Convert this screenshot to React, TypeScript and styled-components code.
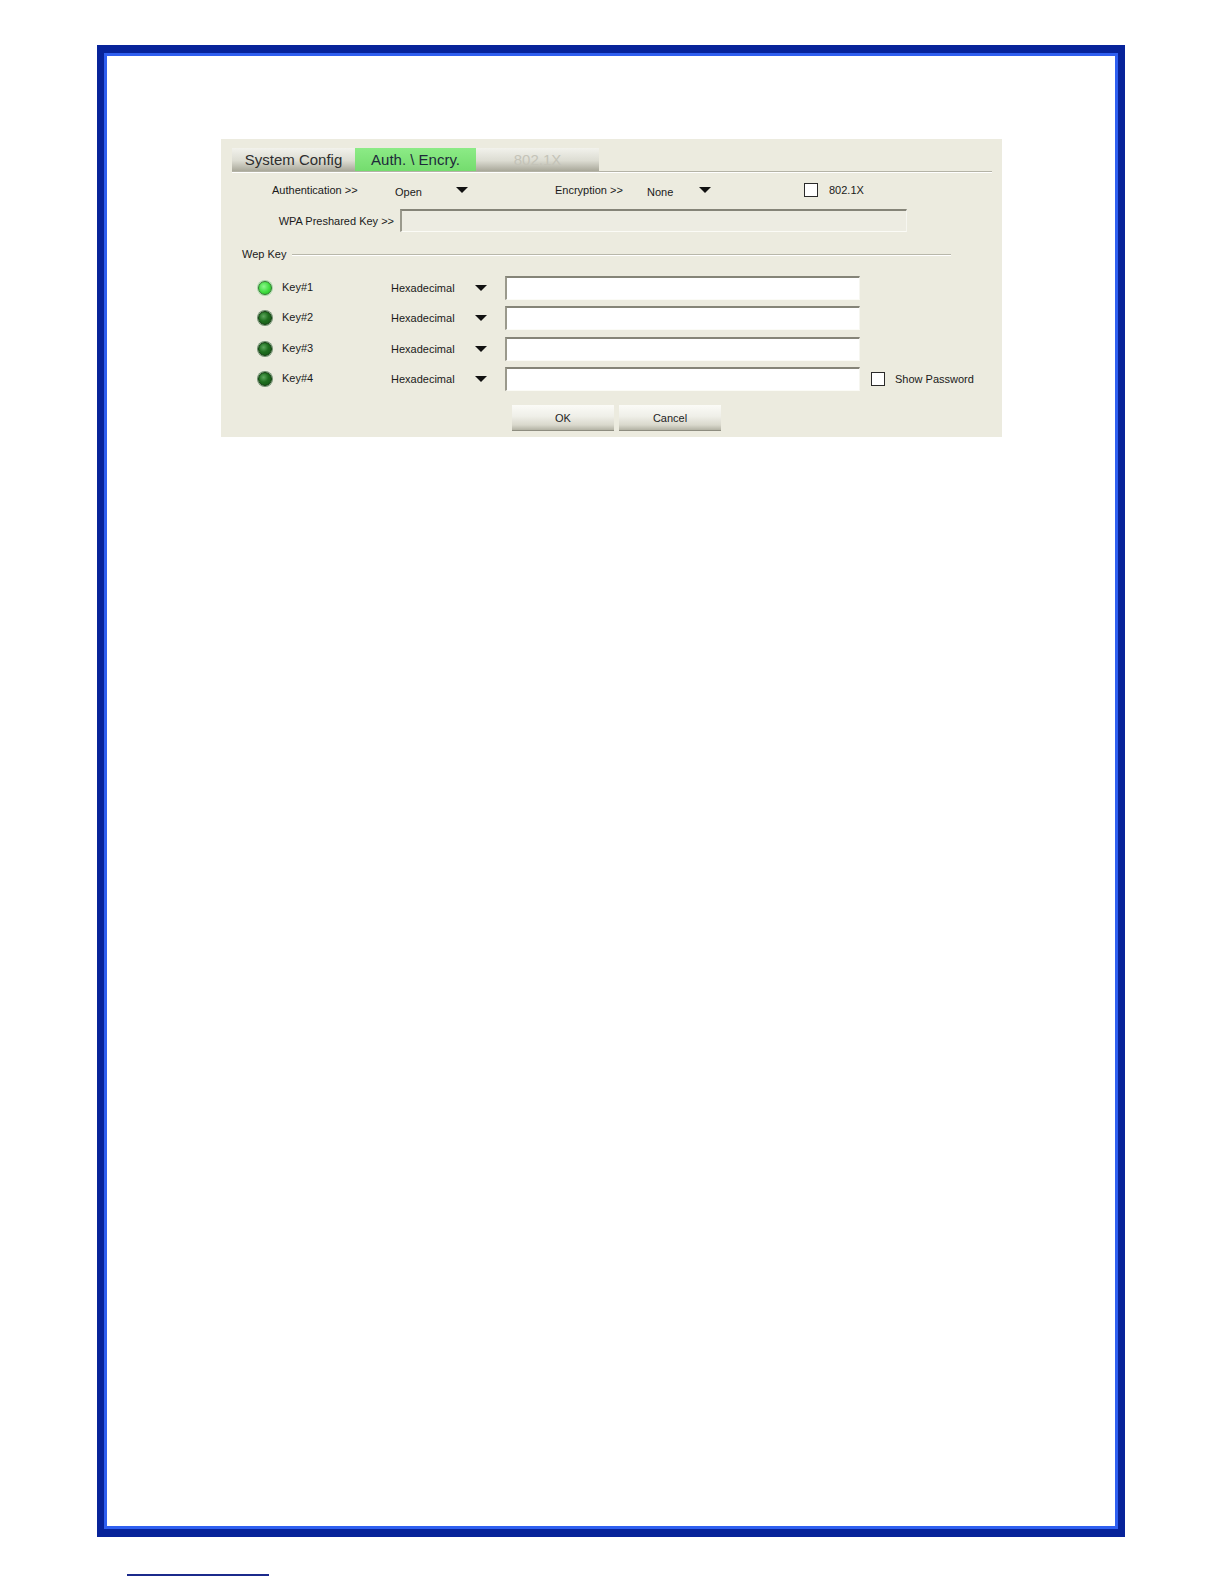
import React from 'react'
import styled, { createGlobalStyle } from 'styled-components'

const GlobalStyle = createGlobalStyle`
  html, body {
    margin: 0;
    padding: 0;
    background: #ffffff;
  }
  body {
    font-family: "Liberation Sans", Arial, sans-serif;
  }
`

const Page = styled.div`
  width: 1224px;
  height: 1584px;
  padding-top: 45px;
  box-sizing: border-box;
`

const Frame = styled.div`
  margin-left: 97px;
  width: 1028px;
  height: 1492px;
  box-sizing: border-box;
  border: 8px solid #07239a;
  border-left-width: 7px;
  border-right-width: 7px;
  box-shadow: inset 0 0 0 3px #2f5ff0;
  padding: 86px 0 0 117px;
`

const FooterRule = styled.div`
  margin: 37px 0 0 127px;
  width: 142px;
  height: 2px;
  background: #1b2a8c;
`

const Panel = styled.div`
  width: 781px;
  box-sizing: border-box;
  background: #ecebdf;
  padding: 9px 0 6px;
  font-size: 11px;
  color: #1a1a1a;
`

const TabBar = styled.div`
  display: flex;
  margin: 0 10px 0 11px;
  height: 23px;
  border-bottom: 1px solid #b4b3a6;
  box-shadow: 0 1px 0 #ffffff;
`

const Tab = styled.div<{ $active?: boolean; $disabled?: boolean; $w: number }>`
  width: ${(p) => p.$w}px;
  display: flex;
  align-items: center;
  justify-content: center;
  font-size: 15px;
  color: ${(p) => (p.$disabled ? '#c4c3b8' : p.$active ? '#1e2a3a' : '#2e2e2e')};
  background: ${(p) =>
    p.$active
      ? 'linear-gradient(#8ceb86, #74dc6e)'
      : 'linear-gradient(#f2f2ec 0%, #dcdcd2 55%, #a9a89a 100%)'};
`

const Row1 = styled.div`
  display: grid;
  grid-template-columns: 123px 61px 99px 92px 52px 105px 25px auto;
  align-items: center;
  height: 20px;
  margin: 8px 0 0 51px;
`

const Text = styled.span<{ $dy?: number }>`
  white-space: nowrap;
  position: relative;
  top: ${(p) => p.$dy ?? 0}px;
`

const Arrow = styled.span`
  display: block;
  width: 0;
  height: 0;
  border-left: 6px solid transparent;
  border-right: 6px solid transparent;
  border-top: 6px solid #111;
`

const Check = styled.span`
  display: block;
  width: 12px;
  height: 12px;
  background: #ffffff;
  border: 1px solid #2a2a2a;
`

const Row2 = styled.div`
  display: flex;
  align-items: center;
  gap: 6px;
  height: 23px;
  margin-top: 9px;
`

const RightLabel = styled.span`
  width: 173px;
  text-align: right;
  white-space: nowrap;
`

const Field = styled.div<{ $w: number; $h: number; $disabled?: boolean }>`
  width: ${(p) => p.$w}px;
  height: ${(p) => p.$h}px;
  box-sizing: border-box;
  background: ${(p) => (p.$disabled ? '#edece2' : '#ffffff')};
  border-top: 2px solid #858478;
  border-left: 2px solid #9a998c;
  border-bottom: 1px solid #fbfbf6;
  border-right: 1px solid #f6f6f0;
`

const GroupHead = styled.div`
  display: flex;
  align-items: center;
  gap: 6px;
  height: 14px;
  margin: 15px 51px 0 21px;
`

const GroupLine = styled.div`
  flex: 1;
  height: 1px;
  background: #b8b7aa;
  box-shadow: 0 1px 0 #ffffff;
`

const Keys = styled.div`
  margin: 12px 0 0 37px;
`

const KeyRow = styled.div`
  display: grid;
  grid-template-columns: 24px 109px 84px 30px 355px 11px 24px auto;
  align-items: center;
  height: 30.3px;
`

const Led = styled.span<{ $on?: boolean }>`
  display: block;
  width: 14px;
  height: 14px;
  border-radius: 50%;
  box-sizing: border-box;
  border: 1px solid ${(p) => (p.$on ? '#2f7a2f' : '#0d3a0d')};
  background: ${(p) =>
    p.$on
      ? 'radial-gradient(circle at 40% 38%, #8cf78c 0%, #3fdc3f 55%, #22b522 100%)'
      : 'radial-gradient(circle at 38% 36%, #5da85d 0%, #1f6f1f 45%, #145214 100%)'};
  box-shadow: 0 0 0 1px ${(p) => (p.$on ? '#a6d8a6' : '#6d8f6d')};
`

const Buttons = styled.div`
  display: flex;
  gap: 5px;
  margin: 11px 0 0 291px;
`

const Button = styled.div`
  width: 102px;
  height: 26px;
  box-sizing: border-box;
  display: flex;
  align-items: center;
  justify-content: center;
  font-size: 11px;
  color: #1e1e1e;
  background: linear-gradient(#fbfbf7 0%, #efefe8 45%, #d9d8cc 80%, #b3b2a4 100%);
  border-bottom: 1px solid #8e8d80;
`

const keys = ['Key#1', 'Key#2', 'Key#3', 'Key#4']

export default function App() {
  return (
    <>
      <GlobalStyle />
      <Page>
        <Frame>
          <Panel>
            <TabBar>
              <Tab $w={123}>System Config</Tab>
              <Tab $w={121} $active>
                Auth. \ Encry.
              </Tab>
              <Tab $w={123} $disabled>
                802.1X
              </Tab>
            </TabBar>

            <Row1>
              <Text>Authentication &gt;&gt;</Text>
              <Text $dy={2}>Open</Text>
              <Arrow />
              <Text>Encryption &gt;&gt;</Text>
              <Text $dy={2}>None</Text>
              <Arrow />
              <Check />
              <Text>802.1X</Text>
            </Row1>

            <Row2>
              <RightLabel>WPA Preshared Key &gt;&gt;</RightLabel>
              <Field $w={507} $h={23} $disabled />
            </Row2>

            <GroupHead>
              <Text>Wep Key</Text>
              <GroupLine />
            </GroupHead>

            <Keys>
              {keys.map((k, i) => (
                <KeyRow key={k}>
                  <Led $on={i === 0} />
                  <Text $dy={-1}>{k}</Text>
                  <Text>Hexadecimal</Text>
                  <Arrow />
                  <Field $w={355} $h={24} />
                  <span />
                  {i === 3 ? <Check /> : <span />}
                  {i === 3 ? <Text>Show Password</Text> : <span />}
                </KeyRow>
              ))}
            </Keys>

            <Buttons>
              <Button>OK</Button>
              <Button>Cancel</Button>
            </Buttons>
          </Panel>
        </Frame>
        <FooterRule />
      </Page>
    </>
  )
}
